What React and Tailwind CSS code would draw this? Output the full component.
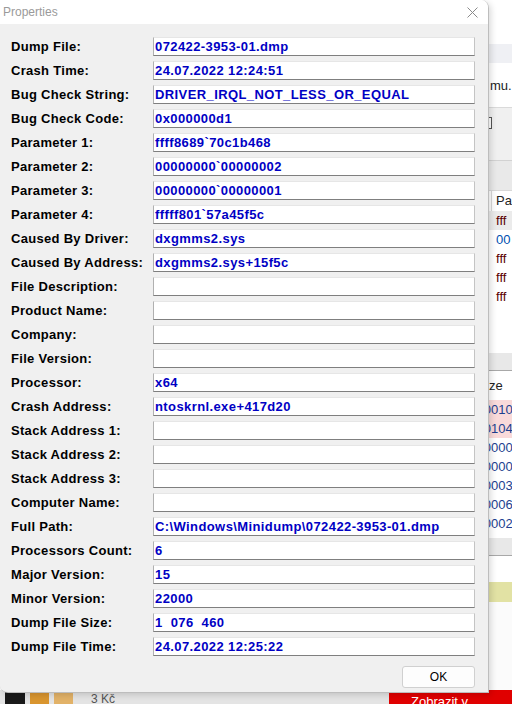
import React from 'react'

const fields = [
  ['Dump File:', '072422-3953-01.dmp'],
  ['Crash Time:', '24.07.2022 12:24:51'],
  ['Bug Check String:', 'DRIVER_IRQL_NOT_LESS_OR_EQUAL'],
  ['Bug Check Code:', '0x000000d1'],
  ['Parameter 1:', 'ffff8689`70c1b468'],
  ['Parameter 2:', '00000000`00000002'],
  ['Parameter 3:', '00000000`00000001'],
  ['Parameter 4:', 'fffff801`57a45f5c'],
  ['Caused By Driver:', 'dxgmms2.sys'],
  ['Caused By Address:', 'dxgmms2.sys+15f5c'],
  ['File Description:', ''],
  ['Product Name:', ''],
  ['Company:', ''],
  ['File Version:', ''],
  ['Processor:', 'x64'],
  ['Crash Address:', 'ntoskrnl.exe+417d20'],
  ['Stack Address 1:', ''],
  ['Stack Address 2:', ''],
  ['Stack Address 3:', ''],
  ['Computer Name:', ''],
  ['Full Path:', 'C:\\Windows\\Minidump\\072422-3953-01.dmp'],
  ['Processors Count:', '6'],
  ['Major Version:', '15'],
  ['Minor Version:', '22000'],
  ['Dump File Size:', '1  076  460'],
  ['Dump File Time:', '24.07.2022 12:25:22'],
]

const crashRows = [
  { text: 'fff', color: 'text-[#5a0000]', bg: 'bg-[#ebebeb]' },
  { text: '00', color: 'text-[#0050b0]', bg: '' },
  { text: 'fff', color: 'text-[#5a0000]', bg: '' },
  { text: 'fff', color: 'text-[#5a0000]', bg: '' },
  { text: 'fff', color: 'text-[#5a0000]', bg: '' },
]

const sizeRows = [
  { text: '0x0010', bg: 'bg-[#f9dada]' },
  { text: '0x0104', bg: 'bg-[#f9dada]' },
  { text: '0x0000', bg: '' },
  { text: '0x0000', bg: '' },
  { text: '0x0003', bg: '' },
  { text: '0x0006', bg: '' },
  { text: '0x0002', bg: '' },
]

// the main BlueScreenView window behind the dialog
function Backdrop() {
  return (
    <div className="flex flex-col w-full h-full bg-white text-[13px] text-[#222] font-['Liberation_Sans',Arial,sans-serif]">
      <div className="h-[44px] shrink-0" />
      <div className="h-[19px] shrink-0 bg-[#eff0f4]" />
      <div className="h-[44px] shrink-0 flex items-center pl-[490px] leading-none">mu.</div>
      <div className="h-[53px] shrink-0 bg-[#f0f0f0] border-t border-[#dadada] pt-[9px] pl-[480px]">
        <div className="size-[12px] border border-[#555] bg-white" />
      </div>
      <div className="h-[30px] shrink-0 bg-[#e9e9e9] border-t border-[#d2d2d2]" />
      <div className="h-[21px] shrink-0 flex items-center border-t border-[#d8d8d8] pl-[491px]">
        <span className="border-l border-[#d8d8d8] h-full flex items-center pl-[4px]">Pa</span>
      </div>
      {crashRows.map((r, i) => (
        <div key={i} className={`h-[19px] shrink-0 flex items-center pl-[496px] ${r.bg} ${r.color}`}>
          {r.text}
        </div>
      ))}
      <div className="h-[47px] shrink-0" />
      <div className="h-[18px] shrink-0 bg-[#e8e8e8] border-b border-[#a8a8a8]" />
      <div className="h-[29px] shrink-0 flex items-center pl-[489px]">ze</div>
      {sizeRows.map((r, i) => (
        <div key={i} className={`h-[19px] shrink-0 flex items-center pl-[470px] text-[#1d3f8f] ${r.bg}`}>
          {r.text}
        </div>
      ))}
      <div className="h-[5px] shrink-0" />
      <div className="h-[18px] shrink-0 bg-[#e8e8e8] border-b border-[#a8a8a8]" />
      <div className="h-[26px] shrink-0" />
      <div className="h-[20px] shrink-0 bg-[#e2e2a4]" />
      <div className="h-[88px] shrink-0 bg-[#fbfbfb]" />
      <div className="flex-1 flex bg-[#e4e4e4]">
        <div className="flex items-start gap-[5px] pl-[5px] pt-[2px]">
          <div className="w-[20px] h-[12px] bg-[#1a1a1a]" />
          <div className="w-[19px] h-[12px] bg-[#d9952f]" />
          <div className="w-[19px] h-[12px] bg-[#e2b268]" />
          <span className="pl-[13px] text-[12px] leading-none pt-[1px] text-[#555]">3 Kč</span>
        </div>
        <div className="ml-auto w-[123px] bg-[#e00000] text-white text-[13px] pl-[22px] pt-[5px] leading-none">Zobrazit v</div>
      </div>
    </div>
  )
}

function CloseGlyph() {
  return (
    <svg width="11" height="11" viewBox="0 0 11 11" className="text-[#8a8a8a]">
      <path d="M0.5 0.5L10.5 10.5M10.5 0.5L0.5 10.5" stroke="currentColor" strokeWidth="1" fill="none" />
    </svg>
  )
}

function FieldRow({ label, value }) {
  return (
    <div className="flex items-center h-[19px]">
      <div className="w-[142px] shrink-0 text-[13px] font-bold text-black leading-none tracking-[0.3px]">{label}</div>
      <div className="flex-1 h-full flex items-center bg-white border-t border-l border-t-[#e6e6e6] border-l-[#b0b0b0] border-r border-r-[#c4c4c4] border-b border-b-[#7f7f7f] pl-[1px]">
        <span className="text-[13px] font-bold text-[#0000c4] leading-none tracking-[0.4px] whitespace-pre">{value}</span>
      </div>
    </div>
  )
}

export default function App() {
  return (
    <div className="relative w-[512px] h-[704px] overflow-hidden">
      <Backdrop />

      <div className="absolute left-0 top-0 w-[489px] h-[693px] flex flex-col rounded-tr-[8px] rounded-bl-[8px] overflow-hidden border-r border-b border-[#bdbdbd] shadow-[2px_2px_6px_rgba(0,0,0,0.15)] font-['Liberation_Sans',Arial,sans-serif]">
        <div className="h-[24px] shrink-0 bg-white flex items-center justify-between pl-[3px] pr-[10px]">
          <span className="text-[12px] text-[#9a9a9a] leading-none">Properties</span>
          <CloseGlyph />
        </div>

        <div className="flex-1 bg-[#f0f0f0] flex flex-col pt-[13px] pl-[11px] pr-[13px]">
          <div className="flex flex-col gap-[5px]">
            {fields.map(([label, value]) => (
              <FieldRow key={label} label={label} value={value} />
            ))}
          </div>
          <button className="self-end mt-[10px] w-[73px] h-[22px] rounded-[3px] border border-[#d0d0d0] bg-[#fdfdfd] text-[12px] text-black leading-none">
            OK
          </button>
        </div>
      </div>
    </div>
  )
}
